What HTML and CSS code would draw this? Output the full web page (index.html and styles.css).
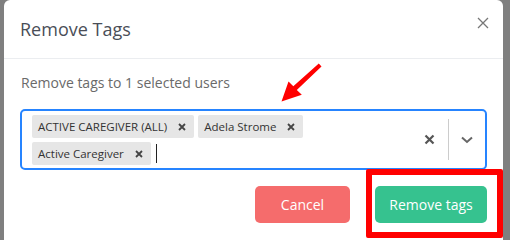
FILE: index.html
```html
<!DOCTYPE html>
<html>
<head>
<meta charset="utf-8">
<link rel="stylesheet" href="styles.css">
</head>
<body>
<div class="backdrop">
  <div class="modal">
    <div class="modal-header">
      <h2 class="title">Remove Tags</h2>
      <button class="close" aria-label="Close">
        <svg width="12" height="12" viewBox="0 0 12 12"><path d="M1 1L11 11M11 1L1 11" stroke="#777" stroke-width="1.3" fill="none"/></svg>
      </button>
    </div>
    <div class="modal-body">
      <p class="desc">Remove tags to 1 selected users</p>
      <div class="select">
        <div class="values">
          <span class="tag"><span class="tag-label">ACTIVE CAREGIVER (ALL)</span><span class="tag-x"><svg width="8" height="8" viewBox="0 0 8 8"><path d="M1 1L7 7M7 1L1 7" stroke="#444" stroke-width="1.8"/></svg></span></span>
          <span class="tag"><span class="tag-label">Adela Strome</span><span class="tag-x"><svg width="8" height="8" viewBox="0 0 8 8"><path d="M1 1L7 7M7 1L1 7" stroke="#444" stroke-width="1.8"/></svg></span></span>
          <span class="tag"><span class="tag-label">Active Caregiver</span><span class="tag-x"><svg width="8" height="8" viewBox="0 0 8 8"><path d="M1 1L7 7M7 1L1 7" stroke="#444" stroke-width="1.8"/></svg></span></span>
          <span class="cursor"></span>
        </div>
        <div class="indicators">
          <span class="clear"><svg width="11" height="11" viewBox="0 0 11 11"><path d="M1.5 1.5L9.5 9.5M9.5 1.5L1.5 9.5" stroke="#555" stroke-width="2.2"/></svg></span>
          <span class="sep"></span>
          <span class="chev"><svg width="12" height="8" viewBox="0 0 12 8"><path d="M1 1.5L6 6L11 1.5" stroke="#666" stroke-width="2" fill="none"/></svg></span>
        </div>
      </div>
    </div>
    <div class="modal-footer">
      <button class="btn btn-cancel">Cancel</button>
      <button class="btn btn-remove">Remove tags</button>
    </div>
  </div>
  <div class="highlight"></div>
  <svg class="arrow" width="60" height="60" viewBox="270 55 60 60">
    <polygon points="281.5,101.5 288.5,81.5 293.3,86.3 318.8,63.5 321.5,66.5 296.8,89.9 301.8,94.8" fill="#f00"/>
  </svg>
</div>
</body>
</html>
```

FILE: styles.css
```css
* { box-sizing: border-box; }
html, body { margin: 0; padding: 0; }
body {
  width: 510px;
  height: 240px;
  overflow: hidden;
  background: #7f7f7f;
  font-family: "Open Sans", "Liberation Sans", sans-serif;
}
.backdrop {
  position: relative;
  width: 510px;
  height: 240px;
  padding-left: 4px;
}
.modal {
  width: 499px;
  height: 246px;
  background: #fff;
  border-radius: 6px;
  display: flex;
  flex-direction: column;
}
.modal-header {
  height: 59px;
  border-bottom: 1px solid #ebedf0;
  display: flex;
  align-items: center;
  justify-content: space-between;
  padding: 0 14px 0 16px;
}
.title {
  margin: 0;
  font-size: 18px;
  font-weight: 500;
  color: #4a4e57;
}
.close {
  border: 0;
  background: none;
  padding: 0;
  width: 12px;
  height: 12px;
  margin-top: -12px;
  display: flex;
}
.modal-body {
  padding: 14px 16px 0 16px;
}
.desc {
  margin: 0 0 16px 1px;
  font-size: 14px;
  line-height: 20px;
  color: #6a6a6a;
}
.select {
  height: 61px;
  border: 2px solid #2684ff;
  border-radius: 5px;
  display: flex;
  align-items: stretch;
}
.values {
  flex: 1;
  display: flex;
  flex-wrap: wrap;
  align-content: flex-start;
  align-items: center;
  padding: 2px 8px;
}
.tag {
  display: inline-flex;
  align-items: center;
  background: #e6e6e6;
  border-radius: 2px;
  margin: 2px;
  height: 23px;
}
.tag-label {
  font-size: 11.5px;
  color: #333;
  padding: 0 0 0 6px;
}
.tag-x {
  display: flex;
  padding: 0 8px 0 11px;
}
.cursor {
  width: 1px;
  height: 19px;
  background: #222;
  margin-left: 3px;
}
.indicators {
  display: flex;
  align-items: center;
}
.clear {
  display: flex;
  padding: 0 13px 0 8px;
}
.sep {
  width: 1px;
  height: 41px;
  background: #ccc;
}
.chev {
  display: flex;
  padding: 0 12px 0 12px;
}
.modal-footer {
  display: flex;
  justify-content: flex-end;
  gap: 25px;
  padding: 16px 16px 0 0;
}
.btn {
  border: 0;
  height: 37px;
  border-radius: 5px;
  color: #fff;
  font-family: inherit;
  font-size: 14px;
  padding: 0;
}
.btn-cancel {
  width: 95px;
  background: #f56c6c;
}
.btn-remove {
  width: 112px;
  background: #36c28f;
}
.highlight {
  position: absolute;
  left: 366px;
  top: 169px;
  width: 137px;
  height: 69px;
  border: 6px solid #ff0000;
  border-radius: 2px;
}
.arrow {
  position: absolute;
  left: 270px;
  top: 55px;
}
```
